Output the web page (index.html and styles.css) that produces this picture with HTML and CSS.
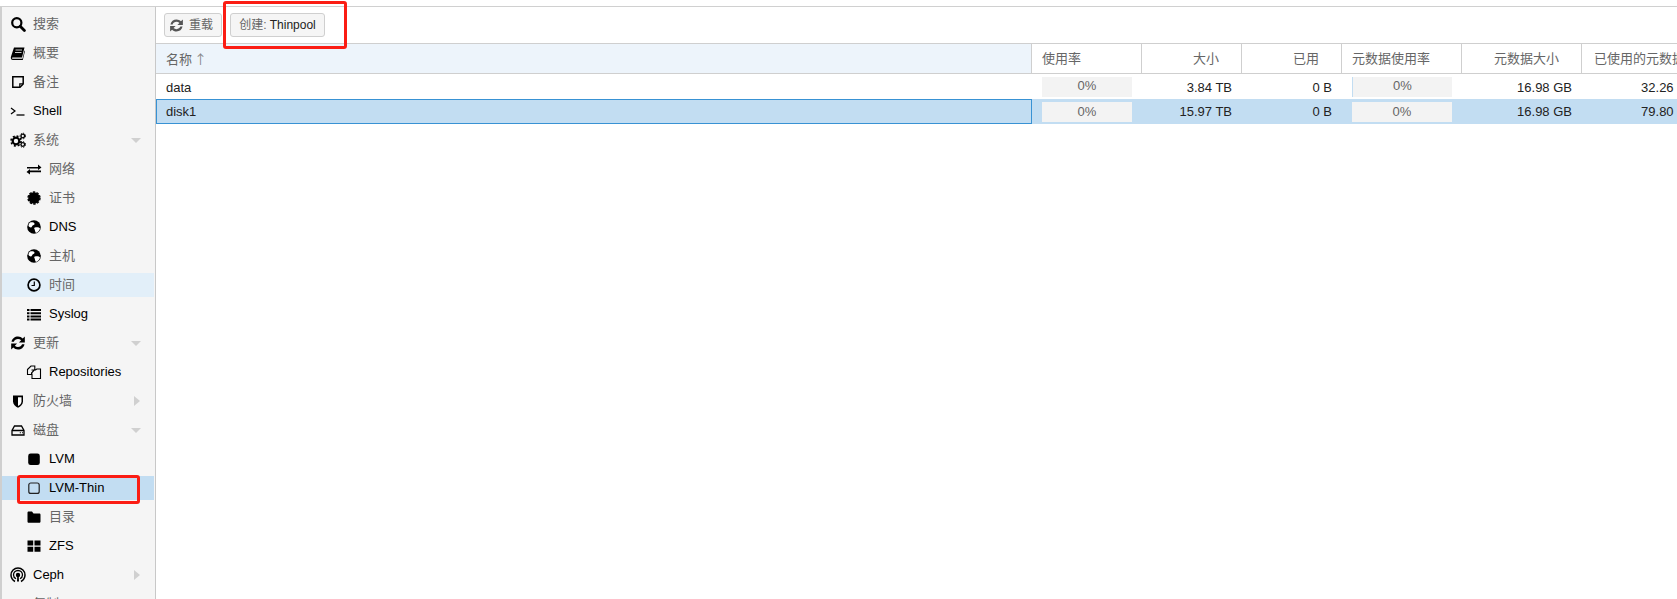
FILE: index.html
```html
<!DOCTYPE html>
<html lang="zh">
<head>
<meta charset="utf-8">
<title>LVM-Thin</title>
<link rel="stylesheet" href="styles.css">
</head>
<body>
<svg class="defs" width="0" height="0">
  <defs>
    <symbol id="i-search" viewBox="0 0 16 16"><circle cx="6.8" cy="6.8" r="4.6" fill="none" stroke="#000" stroke-width="2.2"/><path d="M10.2 10.2 14.4 14.4" stroke="#000" stroke-width="2.8" stroke-linecap="round"/></symbol>
    <symbol id="i-book" viewBox="0 0 16 16"><path d="M4 2.500H14.500L12 12.500H2.800C1.600 12.500 1.500 13.800 2.800 13.800H12.500L14.500 5.500 15 6 12.800 15H3C.8 15 .5 13 1 11.500Z" fill="#000"/><path d="M5.500 5h6.500M5 7.500h6.500" stroke="#fff" stroke-width=".8"/></symbol>
    <symbol id="i-note" viewBox="0 0 16 16"><path d="M2.800 2.800H13.200V10L10 13.200H2.800Z" fill="none" stroke="#000" stroke-width="1.500"/><path d="M9.800 13V9.800H13" fill="none" stroke="#000" stroke-width="1.200"/></symbol>
    <symbol id="i-term" viewBox="0 0 16 16"><path d="M1 5 5 8 1 11" fill="none" stroke="#000" stroke-width="1.200"/><path d="M6.500 12H14.500" stroke="#000" stroke-width="1.300"/></symbol>
    <symbol id="i-cogs" viewBox="0 0 16 16"><circle cx="6" cy="9" r="3.300" fill="none" stroke="#000" stroke-width="2.200"/><circle cx="6" cy="9" r="5" fill="none" stroke="#000" stroke-width="1.500" stroke-dasharray="2 1.930"/><circle cx="12.800" cy="4" r="1.800" fill="none" stroke="#000" stroke-width="1.300"/><circle cx="12.800" cy="4" r="2.800" fill="none" stroke="#000" stroke-width="1" stroke-dasharray="1.300 1.300"/><circle cx="12.800" cy="12.500" r="1.800" fill="none" stroke="#000" stroke-width="1.300"/><circle cx="12.800" cy="12.500" r="2.800" fill="none" stroke="#000" stroke-width="1" stroke-dasharray="1.300 1.300"/></symbol>
    <symbol id="i-exchange" viewBox="0 0 16 16"><path d="M1 6H12V3.500L15.500 6.500 12 9V7.500H1Z M15 9.500H4V8L.5 11 4 13.500V11.200H15Z" fill="#000"/></symbol>
    <symbol id="i-cert" viewBox="0 0 16 16"><circle cx="8" cy="8" r="5.800" fill="#000"/><circle cx="8" cy="8" r="6" fill="none" stroke="#000" stroke-width="1.400" stroke-dasharray="2.400 1.370"/></symbol>
    <symbol id="i-globe" viewBox="0 0 16 16"><circle cx="8" cy="8" r="6.800" fill="#000"/><path d="M4 3.500C6 3 8 3.200 8.500 4.500 9 6 6.500 6 6 7.500 5.500 9 3.500 8.500 2.500 7 2.500 5.500 3 4.500 4 3.500ZM9 8.500C11 8 13.500 8.500 14 9.500 13.500 11.500 12 13.500 10 14 9 13 9 11 8.500 10 8 9 8 9 9 8.500Z" fill="#fff"/></symbol>
    <symbol id="i-clock" viewBox="0 0 16 16"><circle cx="8" cy="8" r="5.900" fill="none" stroke="#000" stroke-width="1.700"/><path d="M8.300 4.500V8.500H5.500" fill="none" stroke="#000" stroke-width="1.200"/></symbol>
    <symbol id="i-list" viewBox="0 0 16 16"><path d="M1 3h2.500v2H1ZM1 6.200h2.500v2H1ZM1 9.400h2.500v2H1ZM1 12.600h2.500v2H1ZM4.500 3H15v2H4.500ZM4.500 6.200H15v2H4.500ZM4.500 9.400H15v2H4.500ZM4.500 12.600H15v2H4.500Z" fill="#000"/></symbol>
    <symbol id="i-refresh" viewBox="1.200 1.200 13.600 13.600"><path d="M2.500 7C3 4.200 5.300 2.500 8 2.500c1.700 0 3 .7 4 1.700L13.800 2.500V7.600H8.800L10.700 5.700C9.900 5 9 4.700 8 4.700 6.300 4.700 5 5.600 4.500 7ZM13.500 9C13 11.800 10.700 13.500 8 13.500c-1.700 0-3-.7-4-1.700L2.200 13.500V8.400H7.200L5.300 10.300C6.100 11 7 11.300 8 11.300 9.700 11.300 11 10.400 11.500 9Z" fill="currentColor"/></symbol>
    <symbol id="i-repo" viewBox="0 0 16 16"><path d="M1.500 5.500 5 2H8.800V5.500L5.500 9V10.500H1.500ZM5.500 6H9.500L10.800 5H14.500V14.500H6V9.500" fill="none" stroke="#000" stroke-width="1.100"/></symbol>
    <symbol id="i-shield" viewBox="0 0 16 16"><path d="M3 2.500H13V8.500C13 11.500 10.500 13.500 8 14.800 5.500 13.500 3 11.500 3 8.500Z" fill="#000"/><path d="M8 4.200H11.500V8.500C11.500 10.500 9.800 12 8 13Z" fill="#fff"/></symbol>
    <symbol id="i-hdd" viewBox="0 0 16 16"><path d="M4.500 4H11.500L14 8.500V13H2V8.500Z M2.500 8.500H13.500" fill="none" stroke="#000" stroke-width="1.300"/><path d="M9.800 10.800H10.900M12 10.800H13" stroke="#000" stroke-width="1.100"/></symbol>
    <symbol id="i-square" viewBox="0 0 16 16"><rect x="2.200" y="2.500" width="11.600" height="11.600" rx="2.400" fill="#000"/></symbol>
    <symbol id="i-square-o" viewBox="0 0 16 16"><rect x="2.800" y="3" width="10.400" height="10.400" rx="2" fill="none" stroke="#222" stroke-width="1.200"/></symbol>
    <symbol id="i-folder" viewBox="0 0 16 16"><path d="M1.500 3.800C1.500 3 2 2.500 2.800 2.500H6L7.500 4.500H13.200C14 4.500 14.500 5 14.500 5.800V12.500C14.500 13.300 14 13.800 13.200 13.800H2.800C2 13.800 1.500 13.300 1.500 12.500Z" fill="#000"/></symbol>
    <symbol id="i-th" viewBox="0 0 16 16"><path d="M1.500 2.500H7.200V7.400H1.500ZM8.500 2.500H14.500V7.400H8.500ZM1.500 8.800H7.200V13.800H1.500ZM8.500 8.800H14.500V13.800H8.500Z" fill="#000"/></symbol>
    <symbol id="i-ceph" viewBox="0 0 16 16"><path d="M5 14.500C2.800 13.200 1 11 1 8 1 4.200 4.200 1 8 1s7 3.200 7 7c0 3-1.800 5.200-4 6.500" fill="none" stroke="#000" stroke-width="1.500"/><path d="M6 11.800C4.500 11 3.500 9.700 3.500 8 3.500 5.500 5.500 3.500 8 3.500S12.500 5.500 12.500 8c0 1.700-1 3-2.500 3.800" fill="none" stroke="#000" stroke-width="1.300"/><circle cx="8" cy="8" r="2.200" fill="#000"/><path d="M7.200 10H8.800L9 14.500H7Z" fill="#000"/></symbol>
  </defs>
</svg>

<div class="topline"></div>
<div class="app">
  <nav class="side">
    <a class="item"><svg class="ic"><use href="#i-search"/></svg><span class="cjk">搜索</span></a>
    <a class="item"><svg class="ic"><use href="#i-book"/></svg><span class="cjk">概要</span></a>
    <a class="item"><svg class="ic"><use href="#i-note"/></svg><span class="cjk">备注</span></a>
    <a class="item"><svg class="ic"><use href="#i-term"/></svg><span>Shell</span></a>
    <a class="item"><svg class="ic"><use href="#i-cogs"/></svg><span class="cjk">系统</span><i class="arrow-down"></i></a>
    <a class="item sub"><svg class="ic"><use href="#i-exchange"/></svg><span class="cjk">网络</span></a>
    <a class="item sub"><svg class="ic"><use href="#i-cert"/></svg><span class="cjk">证书</span></a>
    <a class="item sub"><svg class="ic"><use href="#i-globe"/></svg><span>DNS</span></a>
    <a class="item sub"><svg class="ic"><use href="#i-globe"/></svg><span class="cjk">主机</span></a>
    <a class="item sub hover"><svg class="ic"><use href="#i-clock"/></svg><span class="cjk">时间</span></a>
    <a class="item sub"><svg class="ic"><use href="#i-list"/></svg><span>Syslog</span></a>
    <a class="item"><svg class="ic"><use href="#i-refresh"/></svg><span class="cjk">更新</span><i class="arrow-down"></i></a>
    <a class="item sub"><svg class="ic"><use href="#i-repo"/></svg><span>Repositories</span></a>
    <a class="item"><svg class="ic"><use href="#i-shield"/></svg><span class="cjk">防火墙</span><i class="arrow-right"></i></a>
    <a class="item"><svg class="ic"><use href="#i-hdd"/></svg><span class="cjk">磁盘</span><i class="arrow-down"></i></a>
    <a class="item sub"><svg class="ic"><use href="#i-square"/></svg><span>LVM</span></a>
    <a class="item sub active"><svg class="ic"><use href="#i-square-o"/></svg><span>LVM-Thin</span></a>
    <a class="item sub"><svg class="ic"><use href="#i-folder"/></svg><span class="cjk">目录</span></a>
    <a class="item sub"><svg class="ic"><use href="#i-th"/></svg><span>ZFS</span></a>
    <a class="item"><svg class="ic"><use href="#i-ceph"/></svg><span>Ceph</span><i class="arrow-right"></i></a>
    <a class="item"><svg class="ic"></svg><span class="cjk">复制</span></a>
  </nav>

  <main class="content">
    <div class="toolbar">
      <button class="btn btn-reload"><svg class="btn-ic"><use href="#i-refresh"/></svg><span class="cjk">重载</span></button>
      <button class="btn btn-create"><span class="cjk">创建:</span> Thinpool</button>
    </div>
    <div class="grid">
      <div class="head name-head"><span class="cjk">名称</span><span class="sort">↑</span></div>
      <div class="head left"><span class="cjk">使用率</span></div>
      <div class="head"><span class="cjk">大小</span></div>
      <div class="head"><span class="cjk">已用</span></div>
      <div class="head left"><span class="cjk">元数据使用率</span></div>
      <div class="head"><span class="cjk">元数据大小</span></div>
      <div class="head left last"><span class="cjk">已使用的元数据大小</span></div>

      <div class="cell name first-row">data</div>
      <div class="cell bar-cell"><div class="bar">0%</div></div>
      <div class="cell num first-row">3.84 TB</div>
      <div class="cell num first-row">0 B</div>
      <div class="cell bar-cell"><div class="bar bar-wide bar-mark">0%</div></div>
      <div class="cell num first-row">16.98 GB</div>
      <div class="cell num first-row">32.26 GB</div>

      <div class="cell name sel focus">disk1</div>
      <div class="cell bar-cell sel"><div class="bar">0%</div></div>
      <div class="cell num sel">15.97 TB</div>
      <div class="cell num sel">0 B</div>
      <div class="cell bar-cell sel"><div class="bar bar-wide">0%</div></div>
      <div class="cell num sel">16.98 GB</div>
      <div class="cell num sel">79.80 GB</div>
    </div>
  </main>
</div>
<div class="mark mark-top"></div>
<div class="mark mark-side"></div>
</body>
</html>
```

FILE: styles.css
```css
* { box-sizing: border-box; }
html, body { margin: 0; height: 599px; overflow: hidden; background: #fff; }
body {
  position: relative;
  font: 13px/16px "Liberation Sans", "Noto Sans CJK SC", sans-serif;
  color: #111;
}
.defs { position: absolute; }
.cjk { color: #666; }

.topline { height: 7px; border-bottom: 1px solid #d0d0d0; }
.app { display: flex; height: 592px; border-left: 2px solid #cfcfcf; }

.side {
  flex: 0 0 154px;
  background: #f5f5f5;
  border-right: 1px solid #c8c8c8;
  padding-top: 5px;
  display: flex;
  flex-direction: column;
  gap: 5px;
}
.item {
  flex: 0 0 24px;
  display: flex;
  align-items: center;
  padding-left: 8px;
  color: #000;
  white-space: nowrap;
}
.item.sub { padding-left: 24px; }
.item.hover { background: #e2eff9; margin-right: 1px; }
.item.active { background: #c2ddf2; margin-right: 1px; }
.ic { width: 16px; height: 16px; margin-right: 7px; flex: none; }
.arrow-down, .arrow-right { margin-left: auto; }
.arrow-down {
  margin-right: 14px;
  border-left: 5px solid transparent;
  border-right: 5px solid transparent;
  border-top: 5px solid #d0d0d0;
}
.arrow-right {
  margin-right: 15px;
  border-top: 5px solid transparent;
  border-bottom: 5px solid transparent;
  border-left: 6px solid #d0d0d0;
}

.content { flex: 1; min-width: 0; overflow: hidden; }
.toolbar {
  height: 37px;
  padding: 6px 0 0 8px;
  display: flex;
  gap: 8px;
  align-items: flex-start;
  border-bottom: 1px solid #cfcfcf;
}
.btn {
  height: 24px;
  padding: 0;
  display: flex;
  align-items: center;
  justify-content: center;
  border: 1px solid #cfcfcf;
  border-radius: 3px;
  background: #f5f5f5;
  font: inherit;
  font-size: 12px;
  color: #222;
  white-space: pre;
}
.btn-reload { width: 58px; gap: 5px; justify-content: flex-start; padding-left: 4px; color: #555; }
.btn-create { width: 95px; }
.btn-ic { width: 15px; height: 15px; }

.grid {
  display: grid;
  grid-template-columns: 876px 110px 100px 100px 120px 120px 124px;
  grid-template-rows: 30px 25px 25px;
  width: 1650px;
}
.head {
  background: #fff;
  border-right: 1px solid #cfcfcf;
  border-bottom: 1px solid #cfcfcf;
  padding: 0 22px 0 10px;
  text-align: right;
  line-height: 29px;
  white-space: nowrap;
  overflow: hidden;
}
.head.left { text-align: left; padding-right: 0; }
.head.last { border-right: 0; padding-left: 12px; }
.name-head { background: #edf4fb; text-align: left; }
.sort { color: #888; font-family: "Noto Sans CJK SC", sans-serif; margin-left: 2px; }

.cell { display: flex; align-items: center; padding: 1px 10px 0; white-space: nowrap; color: #222; }
.first-row { padding-top: 2px; }
.num { justify-content: flex-end; }
.bar-cell { padding: 3px 10px 0; align-items: flex-start; }
.bar {
  flex: none;
  width: 90px;
  height: 20px;
  background: #f3f3f3;
  color: #666;
  text-align: center;
  line-height: 18px;
}
.sel .bar { line-height: 20px; }
.bar-wide { width: 100px; }
.bar-mark { border-left: 1px solid #c2ddf2; }
.sel { background: #c2ddf2; }
.focus { border: 1px solid #3892d4; padding-left: 9px; }

.mark { position: absolute; border: 3px solid #fb1d14; border-radius: 3px; pointer-events: none; }
.mark-top { left: 223px; top: 1px; width: 124px; height: 48px; }
.mark-side { left: 17px; top: 475px; width: 123px; height: 29px; }
```
